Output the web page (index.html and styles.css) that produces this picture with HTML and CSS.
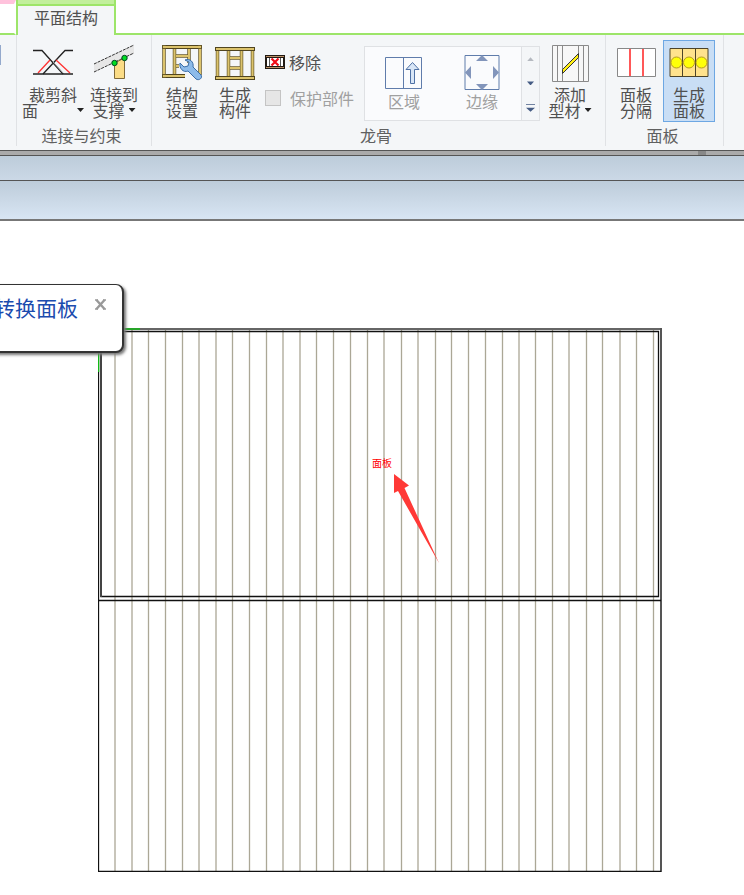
FILE: index.html
```html
<!DOCTYPE html>
<html lang="zh-CN">
<head>
<meta charset="utf-8">
<title>平面结构</title>
<link rel="stylesheet" href="styles.css">
</head>
<body>
<nav class="tabs">
  <span class="tab-prev"></span>
  <a class="tab" href="#ribbon">平面结构</a>
  <span class="tab-rest"></span>
</nav>
<div class="ribbon" id="ribbon">
  <div class="edge"><span class="edge-mark"></span></div>
  <section class="group first">
    <div class="tools">
      <button class="tool wide" type="button">
        <svg width="42" height="38" viewBox="0 0 42 38" fill="none" stroke="#222">
          <path d="M1 6.500H10L31 30M41 6.500H33L11 30" stroke-width="1.300"/>
          <path d="M21 18L32 30" stroke="#999"/>
          <path d="M18 16L6 29M24 16L38 29" stroke="#f33" stroke-width="1.300"/>
          <path d="M1 30H41" stroke-width="1.500"/>
        </svg>
        <span>裁剪斜</span>
        <span class="spread">面<i class="caret"></i></span>
      </button>
      <button class="tool mid" type="button">
        <svg width="42" height="38" viewBox="0 0 42 38">
          <path d="M1 20L41 1V9L1 28Z" fill="#e6e6e6"/>
          <path d="M1 20L41 1M1 28L41 9" stroke="#333" stroke-dasharray="3 1"/>
          <path d="M21.500 19L31.500 14V34.500H21.500Z" fill="#fbdc86" stroke="#806a3a"/>
          <circle cx="21.500" cy="19" r="2.700" fill="#0d2" stroke="#042"/>
          <circle cx="31.500" cy="14" r="2.700" fill="#0d2" stroke="#042"/>
        </svg>
        <span>连接到</span>
        <span class="line">支撑<i class="caret"></i></span>
      </button>
    </div>
    <h2>连接与约束</h2>
  </section>
  <section class="group middle">
    <div class="tools">
      <button class="tool" type="button">
        <svg width="42" height="38" viewBox="0 0 42 38">
          <g fill="none" stroke="#51451f" stroke-width="4"><path d="M1 3H41M1 32H24"/></g>
          <g fill="none" stroke="#6b5c2c" stroke-width="3.500"><path d="M3 1V34M13.500 5V30M28 5V19M39 1V31M15 12H27M15 22H18"/></g>
          <g fill="none" stroke="#dcc36c" stroke-width="2"><path d="M2 3H40M2 32H24M3 5V30M13.500 5V30M28 5V19M39 5V30M15 12H27M15 22H18"/></g>
          <path d="M20 18l4 4 4-1 1-4-4-2c5-2 9 2 8 7l8 8c2 3-2 6-5 4l-8-8c-5 2-9-3-8-8Z" fill="#8dbbea" stroke="#386ca7" transform="translate(-1 1)"/>
        </svg>
        <span>结构</span><span>设置</span>
      </button>
      <button class="tool" type="button">
        <svg width="42" height="38" viewBox="0 0 42 38">
          <g fill="none" stroke="#51451f" stroke-width="4"><path d="M1 5H41M1 34H41"/></g>
          <g fill="none" stroke="#6b5c2c" stroke-width="3.500"><path d="M3.500 7V32M14.500 7V32M27.500 7V32M38.500 7V32M16 14H26M16 24H26"/></g>
          <g fill="none" stroke="#dcc36c" stroke-width="2"><path d="M2 5H40M2 34H40M3.500 7V32M14.500 7V32M27.500 7V32M38.500 7V32M16 14H26M16 24H26"/></g>
        </svg>
        <span>生成</span><span>构件</span>
      </button>
      <div class="stack">
        <button class="row" type="button">
          <svg width="20" height="16" viewBox="0 0 20 16">
            <path d="M0 1H20V15H0Z" fill="#211a14"/>
            <path d="M1 2.500H19M1 13.500H19" stroke="#b98f67"/>
            <path d="M2 4H18V12H2Z" fill="#fff"/>
            <path d="M4.500 4V12M15.500 4V12" stroke="#555"/>
            <path d="M6.500 4.500L13.500 11.500M13.500 4.500L6.500 11.500" stroke="#f00c18" stroke-width="2.200"/>
          </svg>
          移除
        </button>
        <label class="row off"><input type="checkbox" disabled>保护部件</label>
      </div>
      <div class="gallery">
        <button class="item" type="button" disabled>
          <svg width="38" height="36" viewBox="0 0 38 36">
            <path d="M.5 2.500H36.500V33.500H.5ZM18.500 2.500V33.500" fill="none" stroke="#5f7cab"/>
            <path d="M27.500 7.500L34 14.500H29.500V28.500H25.500V14.500H21Z" fill="#d9e6f6" stroke="#4f71a5"/>
          </svg>
          <span>区域</span>
        </button>
        <button class="item" type="button" disabled>
          <svg width="36" height="36" viewBox="0 0 36 36">
            <path d="M1 .5H35V34.500H1Z" fill="none" stroke="#5f7cab"/>
            <path d="M18 0L24 6H12ZM18 35L24 29H12ZM1 17.500L7 11V24ZM35 17.500L29 11V24Z" fill="#8295bb"/>
          </svg>
          <span>边缘</span>
        </button>
        <div class="scroll">
          <button type="button" aria-label="向上" disabled><i class="up"></i></button>
          <button type="button" aria-label="向下"><i class="down"></i></button>
          <button type="button" aria-label="更多"><i class="more"></i></button>
        </div>
      </div>
      <button class="tool" type="button">
        <svg width="42" height="38" viewBox="0 0 42 38">
          <path d="M3.500 1.500H39.500V37.500H3.500ZM8.500 2V37M13.500 2V37M29.500 2V37M34.500 2V37" fill="#f7f7f7" stroke="#8a8a8a"/>
          <path d="M13.500 25.500L29.500 9.500V13.500L13.500 29.500Z" fill="#ffef12" stroke="#333"/>
        </svg>
        <span>添加</span>
        <span class="line">型材<i class="caret"></i></span>
      </button>
    </div>
    <h2>龙骨</h2>
  </section>
  <section class="group last">
    <div class="tools">
      <button class="tool" type="button">
        <svg width="42" height="38" viewBox="0 0 42 38">
          <path d="M2.500 4.500H40.500V32.500H2.500Z" fill="#fff" stroke="#888"/>
          <path d="M15 5V32M28 5V32" stroke="#f22" stroke-width="1.500"/>
        </svg>
        <span>面板</span><span>分隔</span>
      </button>
      <button class="tool active" type="button" aria-pressed="true">
        <svg width="42" height="38" viewBox="0 0 42 38">
          <path d="M2 4.500H40V32.500H2ZM14.500 5V32M27.500 5V32" fill="#ffe28d" stroke="#4c4329"/>
          <g fill="#ffff08" stroke="#b49a22"><circle cx="8.500" cy="18.500" r="5.500"/><circle cx="21" cy="18.500" r="5.500"/><circle cx="33.500" cy="18.500" r="5.500"/></g>
        </svg>
        <span>生成</span><span>面板</span>
      </button>
    </div>
    <h2>面板</h2>
  </section>
  <div class="tail"></div>
</div>
<div class="splitter"><span class="grip"></span></div>
<div class="bar"></div>
<div class="bar tall"></div>
<main class="stage">
  <svg class="plan" width="564" height="544" viewBox="98 328 564 544" fill="none">
    <path d="M115 330V871M132 330V871M148.500 330V871M165.500 330V871M182.500 330V871M199 330V871M216 330V871M232.500 330V871M249.500 330V871M266.500 330V871M283 330V871M300 330V871M316.500 330V871M333.500 330V871M350.500 330V871M367.500 330V871M384 330V871M401.500 330V871M418 330V871M435.500 330V871M451.500 330V871M468.500 330V871M485.500 330V871M502.500 330V871M519 330V871M535.500 330V871M552.500 330V871M569 330V871M586.500 330V871M602.500 330V871M620 330V871M636.500 330V871M653.500 330V871" stroke="#aba796" stroke-width="1.300"/>
    <path d="M98 329H662" stroke="#666" stroke-width="2"/>
    <path d="M661 328V872" stroke="#555" stroke-width="2"/>
    <path d="M98.500 328V871.500H661" stroke="#111" stroke-width="1.300"/>
    <path d="M101 331.500H658.500V596.500H101Z" stroke="#111" stroke-width="1.300"/>
    <path d="M101 331V597" stroke="#444" stroke-width="2"/>
    <path d="M98 600.500H661" stroke="#111" stroke-width="1.300"/>
    <path d="M98.500 340V372M120 329H140" stroke="#12b916" stroke-width="1.500"/>
    <text x="372" y="467" class="tag">面板</text>
    <path d="M394 474L409 485.500L404.500 488L439 563L398 491L394 493Z" fill="#ff3936"/>
  </svg>
  <div class="callout">
    <a href="#plan">转换面板</a>
    <button type="button" aria-label="关闭"><svg width="11" height="11" viewBox="0 0 11 11"><path d="M1.500 1L9.500 10M9.500 1L1.500 10" stroke="#999" stroke-width="2.400"/><path d="M0 1H3M8 1H11M0 10H3M8 10H11" stroke="#999" stroke-width="1.500"/></svg></button>
  </div>
</main>
</body>
</html>
```
FILE: styles.css
```css
* { box-sizing: border-box; }
body {
  margin: 0;
  min-height: 100vh;
  display: flex;
  flex-direction: column;
  background: #fff;
  color: #505050;
  font: 16px/16px "Noto Sans CJK SC", sans-serif;
  overflow-x: hidden;
}
button {
  margin: 0;
  padding: 0;
  border: 0;
  background: none;
  color: inherit;
  font: inherit;
}
svg { display: block; flex: none; }

.tabs { display: flex; height: 35px; }
.tab-prev {
  width: 16px;
  border-top: 4px solid #ffc2dc;
  border-right: 2px solid #fff;
}
.tab-prev, .tab-rest { border-bottom: 2px solid #9de569; }
.tab {
  width: 100px;
  padding-top: 4px;
  border: 2px solid #9de569;
  border-top: 0;
  border-bottom: 0;
  background: linear-gradient(#c2ef9d 0 4px, #9de569 4px 6px, #f4f6f8 6px);
  color: #505050;
  text-align: center;
  line-height: 26px;
  text-decoration: none;
}
.tab-rest { flex: 1; }

.ribbon { display: flex; padding-bottom: 4px; background: #f4f6f8; }
.edge { width: 16px; padding-top: 10px; }
.edge-mark { display: block; width: 1px; height: 20px; background: #94a9cc; }
.group { padding-top: 5px; border-left: 1px solid #e0e2e5; }
.first { padding-left: 4px; padding-right: 9px; }
.middle { padding-left: 4px; padding-right: 9px; }
.last { padding-left: 4px; padding-right: 8px; }
.tail { flex: 1; border-left: 1px solid #e0e2e5; }
.group h2 {
  margin: 4px 0 2px;
  color: #606060;
  font-size: 16px;
  font-weight: 400;
  line-height: 18px;
  text-align: center;
}
.tools { display: flex; gap: 1px; }
.tool {
  display: flex;
  flex-direction: column;
  align-items: center;
  width: 52px;
  height: 82px;
  padding-top: 3px;
  border: 1px solid transparent;
  white-space: nowrap;
}
.tool svg { margin-bottom: 4px; }
.wide { width: 64px; }
.mid { width: 56px; }
.active { border-color: #6da7e3; background: #c9def5; }
.spread, .line { display: flex; align-items: center; gap: 4px; }
.spread { align-self: stretch; justify-content: space-between; }
.caret {
  width: 7px;
  height: 4px;
  background: #222;
  clip-path: polygon(0 0, 100% 0, 50% 100%);
}
.stack { padding: 12px 9px 0 3px; }
.row { display: flex; align-items: center; gap: 4px; height: 20px; white-space: nowrap; }
.row + .row { margin-top: 16px; }
.off { gap: 9px; color: #a0a0a0; }
.off input {
  appearance: none;
  width: 16px;
  height: 16px;
  margin: 0;
  border: 1px solid #c4c4c4;
  background: #e6e6e6;
}
.gallery {
  display: flex;
  height: 75px;
  margin: 6px 3px 0 0;
  border: 1px solid #dfe1e4;
  background: #fafbfd;
}
.item {
  display: flex;
  flex-direction: column;
  align-items: center;
  gap: 2px;
  width: 78px;
  padding-top: 8px;
  color: #a0a0a0;
}
.scroll {
  display: flex;
  flex-direction: column;
  width: 18px;
  border-left: 1px solid #dfe1e4;
  background: #f4f6f8;
}
.scroll button { flex: 1; display: grid; place-items: center; }
.scroll i { width: 7px; height: 4px; background: #455c84; clip-path: polygon(0 0, 100% 0, 50% 100%); }
.scroll .up { background: #b5b9c0; clip-path: polygon(50% 0, 100% 100%, 0 100%); }
.scroll .more { width: 9px; height: 8px; clip-path: polygon(0 0, 100% 0, 100% 1px, 0 1px, 0 4px, 100% 4px, 50% 100%, 0 4px); }

.splitter { height: 6px; border: solid #555; border-width: 1px 0; background: #aaa; }
.grip { display: block; width: 8px; height: 4px; margin: 0 38px 0 auto; background: #888; }
.bar { height: 25px; border-bottom: 1px solid #555; background: linear-gradient(#bdccda, #cbd8e6); }
.tall { height: 40px; border-bottom: 2px solid #777; background: linear-gradient(#bdccda, #d8e5f3); }

.stage { position: relative; flex: 1; min-height: 660px; }
.plan { position: absolute; left: 98px; top: 107px; }
.tag { fill: #f00; font-size: 10px; }
.callout {
  position: absolute;
  left: -20px;
  top: 63px;
  display: flex;
  align-items: flex-start;
  gap: 17px;
  height: 69px;
  padding: 9px 16px 0 13px;
  border: solid #333;
  border-width: 1px 2px 2px 1px;
  border-radius: 8px;
  background: #fff;
  box-shadow: 2px 2px 3px #777;
}
.callout a { color: #1b4bae; font-size: 21px; line-height: 26px; text-decoration: none; white-space: nowrap; }
.callout button { margin-top: 5px; }
```
